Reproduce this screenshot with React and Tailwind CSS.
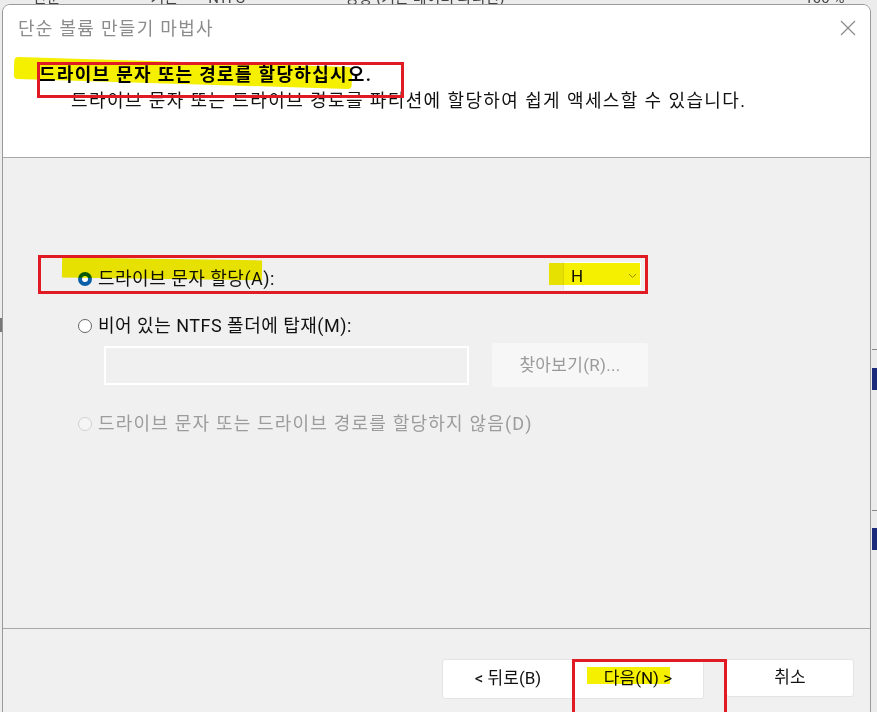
import React from "react";

const font = "font-['Roboto','Noto_Sans_CJK_KR',sans-serif]";

const Radio = ({ checked, disabled }) => {
  if (checked) {
    return (
      <span className="w-[14px] h-[14px] rounded-full bg-[#0a5fa8] flex items-center justify-center shrink-0">
        <span className="w-[6px] h-[6px] rounded-full bg-white" />
      </span>
    );
  }
  return (
    <span
      className={
        "w-[14px] h-[14px] rounded-full border shrink-0 " +
        (disabled ? "border-[#d0d0d0] bg-[#f5f5f5]" : "border-[#666] bg-white")
      }
    />
  );
};

const Chevron = () => (
  <svg width="9" height="6" viewBox="0 0 9 6" fill="none">
    <path d="M1 1l3.5 3.5L8 1" stroke="#9a9a9a" strokeWidth="1" />
  </svg>
);

const CloseIcon = () => (
  <svg width="16" height="16" viewBox="0 0 16 16" fill="none">
    <path d="M1 1l14 14M15 1L1 15" stroke="#8a8a8a" strokeWidth="1.2" />
  </svg>
);

function App() {
  return (
    <div className={"relative w-[877px] h-[712px] overflow-hidden bg-[#ececec] " + font}>
      {/* window behind the dialog */}
      <div className="absolute left-0 top-[-9px] w-full h-[14px] flex items-start text-[15px] leading-[14px] text-[#444] whitespace-nowrap">
        <span className="ml-[33px]">단순</span>
        <span className="ml-[90px]">기본</span>
        <span className="ml-[30px]">NTFS</span>
        <span className="ml-[100px]">정상 (기본 데이터 파티션)</span>
        <span className="ml-[300px]">100 %</span>
      </div>
      <div className="absolute right-0 top-[368px] w-[5px] h-[22px] bg-[#1b2a7a]" />
      <div className="absolute right-0 top-[528px] w-[5px] h-[22px] bg-[#1b2a7a]" />
      <div className="absolute right-0 top-[349px] w-[5px] h-px bg-[#888]" />
      <div className="absolute right-0 top-[510px] w-[5px] h-px bg-[#888]" />
      <div className="absolute left-0 top-[318px] w-[3px] h-[14px] bg-[#777]" />

      {/* dialog */}
      <div className="absolute left-[2px] top-[4px] w-[869px] h-[720px] rounded-t-[8px] border border-[#9a9a9a] overflow-hidden flex flex-col bg-[#f0f0f0]">
        <div className="h-[153px] bg-white border-b border-[#a8a8a8] flex flex-col">
          <div className="flex items-center justify-between h-[46px] pl-[15px] pr-[14px]">
            <span className="text-[18px] text-[#8c8c8c] tracking-[1.3px]">단순 볼륨 만들기 마법사</span>
            <CloseIcon />
          </div>
          <div className="pl-[36px] pt-[12px] text-[18px] font-bold text-black leading-[24px] tracking-[1.3px]">
            드라이브 문자 또는 경로를 할당하십시오.
          </div>
          <div className="pl-[68px] pt-[2px] text-[18px] text-[#111] leading-[24px] tracking-[1.4px]">
            드라이브 문자 또는 드라이브 경로를 파티션에 할당하여 쉽게 액세스할 수 있습니다.
          </div>
        </div>

        <div className="h-[471px] border-b border-[#a8a8a8] pl-[75px] pt-[108px] text-[18px] leading-[24px] tracking-[0.5px]">
          <div className="flex items-center h-[26px]">
            <Radio checked />
            <span className="ml-[6px] text-[#111]">드라이브 문자 할당(A):</span>
            <div className="ml-auto mr-[229px] mb-[6px] w-[78px] h-[28px] bg-white border-l border-[#e2e2e2] flex items-center justify-between pl-[7px] pr-[4px]">
              <span className="text-[17px] text-[#111]">H</span>
              <Chevron />
            </div>
          </div>
          <div className="flex items-center h-[26px] mt-[21px]">
            <Radio />
            <span className="ml-[6px] text-[#111]">비어 있는 NTFS 폴더에 탑재(M):</span>
          </div>
          <div className="flex items-center mt-[4px] ml-[26px]">
            <div className="w-[365px] h-[39px] bg-[#f0f0f0] border-2 border-white" />
            <div className="ml-[23px] w-[156px] h-[44px] bg-[#f7f7f7] rounded-[3px] flex items-center justify-center text-[#9a9a9a] text-[17px] tracking-[0.3px]">
              찾아보기(R)...
            </div>
          </div>
          <div className="flex items-center h-[26px] mt-[24px]">
            <Radio disabled />
            <span className="ml-[6px] text-[#9c9c9c] tracking-[1.2px]">드라이브 문자 또는 드라이브 경로를 할당하지 않음(D)</span>
          </div>
        </div>

        <div className="flex-1 flex items-start pt-[30px] pl-[439px] text-[17px]">
          <div className="flex bg-white rounded-[3px] border border-[#e4e4e4]">
            <div className="w-[130px] h-[38px] flex items-center justify-center text-[#111]">&lt; 뒤로(B)</div>
            <div className="w-[130px] h-[38px] flex items-center justify-center text-[#111]">다음(N) &gt;</div>
          </div>
          <div className="ml-[22px] w-[128px] h-[38px] bg-white rounded-[3px] border border-[#e4e4e4] flex items-center justify-center text-[#111]">
            취소
          </div>
        </div>
      </div>

      {/* annotations: highlighter marks */}
      <div className="absolute left-[14px] top-[62px] w-[338px] h-[22px] bg-[#f5ef00] mix-blend-multiply rotate-[1.7deg] rounded-sm" />
      <div className="absolute left-[62px] top-[259px] w-[200px] h-[20px] bg-[#f5ef00] mix-blend-multiply rotate-[0.8deg]" />
      <div className="absolute left-[549px] top-[263px] w-[91px] h-[22px] bg-[#f5ef00] mix-blend-multiply" />
      <div className="absolute left-[587px] top-[667px] w-[83px] h-[17px] bg-[#f5ef00] mix-blend-multiply" />

      {/* annotations: red boxes */}
      <div className="absolute left-[37px] top-[62px] w-[367px] h-[36px] border-[3px] border-[#e01b24]" />
      <div className="absolute left-[38px] top-[255px] w-[610px] h-[39px] border-[3px] border-[#e01b24]" />
      <div className="absolute left-[572px] top-[659px] w-[155px] h-[60px] border-[3px] border-[#e01b24]" />
    </div>
  );
}

export default App;
